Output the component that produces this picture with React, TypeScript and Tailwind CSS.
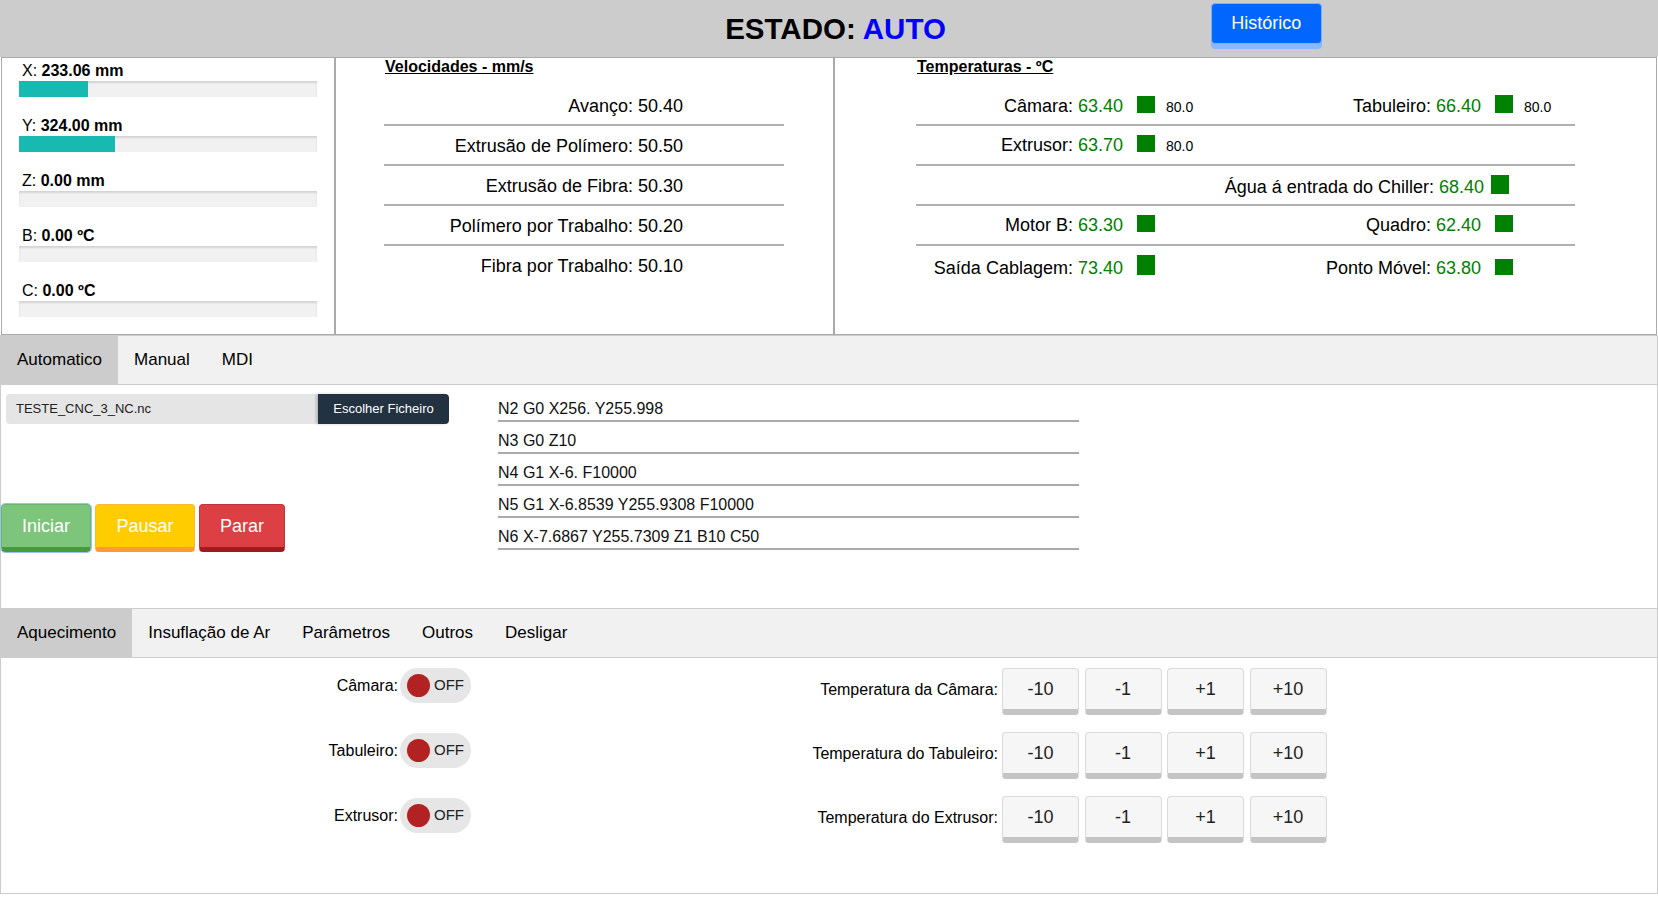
import React from 'react';

type Temp = { label: string; value: string; set?: string; h: string };

const axes = [
  { name: 'X', value: '233.06 mm', pct: 23.2 },
  { name: 'Y', value: '324.00 mm', pct: 32.2 },
  { name: 'Z', value: '0.00 mm', pct: 0 },
  { name: 'B', value: '0.00 ºC', pct: 0 },
  { name: 'C', value: '0.00 ºC', pct: 0 },
];

const speeds = [
  { label: 'Avanço', value: '50.40' },
  { label: 'Extrusão de Polímero', value: '50.50' },
  { label: 'Extrusão de Fibra', value: '50.30' },
  { label: 'Polímero por Trabalho', value: '50.20' },
  { label: 'Fibra por Trabalho', value: '50.10' },
];

const tempRows: { left?: Temp; right?: Temp }[] = [
  {
    left: { label: 'Câmara', value: '63.40', set: '80.0', h: 'h-[17px]' },
    right: { label: 'Tabuleiro', value: '66.40', set: '80.0', h: 'h-[18px]' },
  },
  { left: { label: 'Extrusor', value: '63.70', set: '80.0', h: 'h-[17px]' } },
  {},
  {
    left: { label: 'Motor B', value: '63.30', h: 'h-[17px]' },
    right: { label: 'Quadro', value: '62.40', h: 'h-[17px]' },
  },
  {
    left: { label: 'Saída Cablagem', value: '73.40', h: 'h-[20px]' },
    right: { label: 'Ponto Móvel', value: '63.80', h: 'h-[16px]' },
  },
];

const gcode = [
  'N2 G0 X256. Y255.998',
  'N3 G0 Z10',
  'N4 G1 X-6. F10000',
  'N5 G1 X-6.8539 Y255.9308 F10000',
  'N6 X-7.6867 Y255.7309 Z1 B10 C50',
];

const heaters = ['Câmara', 'Tabuleiro', 'Extrusor'];
const setpoints = ['Temperatura da Câmara', 'Temperatura do Tabuleiro', 'Temperatura do Extrusor'];
const steps = ['-10', '-1', '+1', '+10'];

function TempCells({ t, last }: { t?: Temp; last?: boolean }) {
  const valueWidth = last ? 'flex-1' : 'w-[151px]';
  if (!t) {
    return (
      <>
        <div className="w-[207px] shrink-0" />
        <div className={`${valueWidth} shrink-0`} />
      </>
    );
  }
  return (
    <>
      <div className="w-[207px] shrink-0 text-right">
        {t.label}: <span className="text-[#008000]">{t.value}</span>
      </div>
      <div className={`${valueWidth} shrink-0 pl-[14px]`}>
        <span className={`inline-block w-[18px] bg-[#008000] align-[-1px] ${t.h}`} />
        {t.set && <span className="ml-[11px] text-[14px]">{t.set}</span>}
      </div>
    </>
  );
}

function TabBar({ tabs }: { tabs: string[] }) {
  return (
    <div className="flex h-[50px] border border-[#cccccc] bg-[#f1f1f1]">
      {tabs.map((tab, i) => (
        <div
          key={tab}
          className={`h-[48px] px-[16px] text-[17px] leading-[48px] ${i === 0 ? 'bg-[#cccccc]' : ''}`}
        >
          {tab}
        </div>
      ))}
    </div>
  );
}

export default function App() {
  return (
    <div className="min-h-screen w-full bg-white font-['Liberation_Sans',Arial,sans-serif] text-black">
      {/* Header */}
      <div className="grid h-[57px] grid-cols-[1fr_auto_1fr] items-start bg-[#cccccc]">
        <div />
        <div className="pl-[13px] pt-[12px] text-[29.5px] font-bold leading-[33px]">
          ESTADO: <span className="text-[#0000ff]">AUTO</span>
        </div>
        <div>
          <button className="ml-[265px] mt-[3px] h-[41px] w-[111px] rounded-[4px] border border-[#7fb0ff] bg-[#0066ff] text-[18px] text-white shadow-[0_5px_0_#8ab8ff]">
            Histórico
          </button>
        </div>
      </div>

      {/* Status panels */}
      <div className="flex h-[278px] px-[1px]">
        <div className="w-[334px] shrink-0 border border-[#aaaaaa] pl-[17px] pt-[4px]">
          {axes.map((a, i) => (
            <div key={a.name} className={i > 0 ? 'mt-[20px]' : ''}>
              <div className="pl-[3px] text-[16px] leading-[18px]">
                {a.name}: <span className="font-bold">{a.value}</span>
              </div>
              <div className="mt-[1px] h-[16px] w-[298px] bg-[#f1f1f1] shadow-[inset_0_2px_2px_rgba(0,0,0,0.12)]">
                <div className="h-full bg-[#17b9b1]" style={{ width: `${a.pct}%` }} />
              </div>
            </div>
          ))}
        </div>

        <div className="w-[499px] shrink-0 border border-[#aaaaaa] pl-[48px]">
          <div className="pl-[1px] text-[16px] font-bold leading-[18px] underline">Velocidades - mm/s</div>
          <div className="mt-[10px] w-[400px] text-[18px] leading-[21px]">
            {speeds.map((s, i) => (
              <div
                key={s.label}
                className={`flex h-[40px] pt-[10px] ${i < speeds.length - 1 ? 'border-b-2 border-[#b0b0b0]' : ''}`}
              >
                <div className="w-[299px] shrink-0 text-right">
                  {s.label}: {s.value}
                </div>
              </div>
            ))}
          </div>
        </div>

        <div className="flex-1 border border-[#aaaaaa] pl-[81px]">
          <div className="pl-[1px] text-[16px] font-bold leading-[18px] underline">Temperaturas - ºC</div>
          <div className="mt-[10px] w-[659px] text-[18px] leading-[21px]">
            {tempRows.map((r, i) => (
              <div
                key={i}
                className={`flex h-[40px] items-baseline pt-[9px] ${i < tempRows.length - 1 ? 'border-b-2 border-[#b0b0b0]' : ''}`}
              >
                {i === 2 ? (
                  <div className="w-full pr-[66px] text-right">
                    Água á entrada do Chiller: <span className="text-[#008000]">68.40</span>
                    <span className="ml-[7px] inline-block h-[19px] w-[18px] bg-[#008000] align-[-1px]" />
                  </div>
                ) : (
                  <>
                    <TempCells t={r.left} />
                    <TempCells t={r.right} last />
                  </>
                )}
              </div>
            ))}
          </div>
        </div>
      </div>

      {/* Mode tabs */}
      <TabBar tabs={['Automatico', 'Manual', 'MDI']} />
      <div className="flex h-[223px] border-x border-[#cccccc]">
        <div className="w-[497px] shrink-0">
          <div className="ml-[5px] mt-[9px] flex h-[30px] w-[443px] text-[13px]">
            <div className="flex flex-1 items-center rounded-l-[4px] bg-[#e5e5e5] pl-[10px] text-[#222]">
              TESTE_CNC_3_NC.nc
            </div>
            <div className="flex w-[131px] items-center justify-center rounded-r-[4px] bg-[#233241] text-white shadow-[-2px_0_3px_rgba(0,0,0,0.2)]">
              Escolher Ficheiro
            </div>
          </div>
          <div className="mt-[80px] flex gap-[4px] text-[18px] text-white [text-shadow:0_1px_2px_rgba(0,0,0,0.35)]">
            <button className="h-[48px] w-[90px] rounded-[4px] border border-b-[5px] border-[#6db36d] border-b-[#489a3e] bg-[#7dc57b] outline outline-1 outline-[#9cc2ee]">
              Iniciar
            </button>
            <button className="h-[48px] w-[100px] rounded-[4px] border border-b-[5px] border-[#ffb733] border-b-[#ff9933] bg-[#ffcc00]">
              Pausar
            </button>
            <button className="h-[48px] w-[86px] rounded-[4px] border border-b-[5px] border-[#c43438] border-b-[#a21a1e] bg-[#dc4044]">
              Parar
            </button>
          </div>
        </div>
        <div className="w-[581px] pt-[5px] text-[16px] leading-[18px] text-[#111]">
          {gcode.map(line => (
            <div key={line} className="border-b-2 border-[#aaaaaa] pb-[2px] pt-[10px]">
              {line}
            </div>
          ))}
        </div>
      </div>

      {/* Control tabs */}
      <TabBar tabs={['Aquecimento', 'Insuflação de Ar', 'Parâmetros', 'Outros', 'Desligar']} />
      <div className="flex h-[236px] border border-t-0 border-[#cccccc]">
        <div className="flex w-[470px] shrink-0 flex-col gap-[30px] pt-[10px]">
          {heaters.map(h => (
            <div key={h} className="flex h-[35px] items-center justify-end">
              <span className="text-[16px]">{h}:</span>
              <div className="ml-[2px] flex h-[35px] w-[71px] items-center rounded-full bg-[#e6e6e6] pl-[7px]">
                <span className="h-[23px] w-[23px] rounded-full bg-[#b22222]" />
                <span className="ml-[4px] text-[15px] text-[#222]">OFF</span>
              </div>
            </div>
          ))}
        </div>
        <div className="ml-[289px] flex flex-col gap-[17px] pt-[10px]">
          {setpoints.map(s => (
            <div key={s} className="flex items-start">
              <div className="mt-[13px] w-[238px] shrink-0 text-right text-[16px] leading-[18px]">{s}:</div>
              <div className="ml-[4px] flex gap-[5.5px]">
                {steps.map(st => (
                  <button
                    key={st}
                    className="h-[47px] w-[77px] rounded-[4px] border border-b-[6px] border-[#dadada] border-b-[#c4c4c4] bg-[#f6f6f6] text-[18px] text-[#222]"
                  >
                    {st}
                  </button>
                ))}
              </div>
            </div>
          ))}
        </div>
      </div>
    </div>
  );
}
